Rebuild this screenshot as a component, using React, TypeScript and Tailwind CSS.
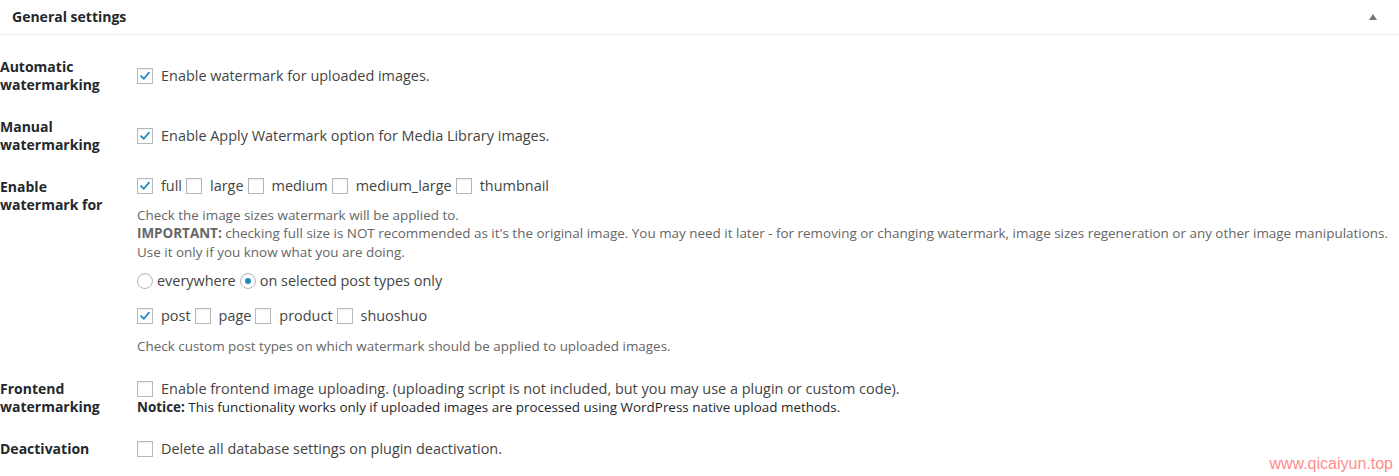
import React from "react";

const FONT = "font-['Open_Sans',sans-serif]";

function Check({ checked = false }: { checked?: boolean }) {
  return (
    <span className="relative inline-flex h-4 w-4 shrink-0 items-center justify-center border border-[#b4b9be] bg-white shadow-[inset_0_1px_2px_rgba(0,0,0,0.07)]">
      {checked && (
        <svg viewBox="0 0 16 16" className="h-4 w-4" aria-hidden>
          <path d="M3.6 8.2 L6.6 11.1 L12.4 4.3" fill="none" stroke="#1e8cbe" strokeWidth="2" strokeLinecap="square" />
        </svg>
      )}
    </span>
  );
}

function Radio({ checked = false }: { checked?: boolean }) {
  return (
    <span className="inline-flex h-4 w-4 shrink-0 items-center justify-center rounded-full border border-[#b4b9be] bg-white shadow-[inset_0_1px_2px_rgba(0,0,0,0.07)]">
      {checked && <span className="h-[6px] w-[6px] rounded-full bg-[#1e8cbe]" />}
    </span>
  );
}

function Opt({ checked, label }: { checked?: boolean; label: string }) {
  return (
    <span className="flex items-center">
      <Check checked={checked} />
      <span className="ml-[8px]">{label}</span>
    </span>
  );
}

export default function App() {
  return (
    <div className={`relative h-[476px] w-[1399px] overflow-hidden bg-white ${FONT} text-[14.45px] text-[#444]`}>
      <div className="flex h-[35px] items-center justify-between border-b border-[#eeeeee] pl-[12px] pr-[22px]">
        <span className="font-bold text-[#23282d] text-[14px] leading-[18px]">General settings</span>
        <svg viewBox="0 0 8 6" className="h-[6px] w-[8px]" aria-hidden>
          <path d="M4 0 L8 6 L0 6 Z" fill="#72777c" />
        </svg>
      </div>

      {/* Automatic */}
      <div className="mt-[23px] flex h-[36px] items-center">
        <div className="w-[137px] text-[14px] font-bold leading-[18px] text-[#23282d]">Automatic<br />watermarking</div>
        <div className="flex items-center leading-[18px]">
          <Opt checked label="Enable watermark for uploaded images." />
        </div>
      </div>

      {/* Manual */}
      <div className="mt-[24px] flex h-[36px] items-center">
        <div className="w-[137px] text-[14px] font-bold leading-[18px] text-[#23282d]">Manual<br />watermarking</div>
        <div className="flex items-center leading-[18px]">
          <Opt checked label="Enable Apply Watermark option for Media Library images." />
        </div>
      </div>

      {/* Enable watermark for */}
      <div className="mt-[23px] flex items-start">
        <div className="w-[137px] pt-[1px] text-[14px] font-bold leading-[18px] text-[#23282d]">Enable<br />watermark for</div>
        <div className="flex flex-col">
          <div className="flex h-[18px] items-center gap-[4px] leading-[18px]">
            <Opt checked label="full" />
            <Opt label="large" />
            <Opt label="medium" />
            <Opt label="medium_large" />
            <Opt label="thumbnail" />
          </div>
          <p className="mt-[10.5px] text-[13.45px] leading-[18.5px] text-[#666]">
            Check the image sizes watermark will be applied to.
            <br />
            <strong className="font-bold">IMPORTANT:</strong> checking full size is NOT recommended as it's the original image. You may need it later - for removing or changing watermark, image sizes regeneration or any other image manipulations.
            <br />
            Use it only if you know what you are doing.
          </p>
          <div className="mt-[11px] flex h-[18px] items-center gap-[4px] leading-[18px]">
            <span className="flex items-center">
              <Radio />
              <span className="ml-[4px]">everywhere</span>
            </span>
            <span className="flex items-center">
              <Radio checked />
              <span className="ml-[4px]">on selected post types only</span>
            </span>
          </div>
          <div className="mt-[17px] flex h-[18px] items-center gap-[4px] leading-[18px]">
            <Opt checked label="post" />
            <Opt label="page" />
            <Opt label="product" />
            <Opt label="shuoshuo" />
          </div>
          <p className="mt-[11.5px] text-[13.45px] leading-[18.5px] text-[#666]">
            Check custom post types on which watermark should be applied to uploaded images.
          </p>
        </div>
      </div>

      {/* Frontend */}
      <div className="mt-[25px] flex items-start">
        <div className="w-[137px] text-[14px] font-bold leading-[18px] text-[#23282d]">Frontend<br />watermarking</div>
        <div className="flex flex-col leading-[18px]">
          <div className="flex h-[18px] items-center">
            <Opt label="Enable frontend image uploading. (uploading script is not included, but you may use a plugin or custom code)." />
          </div>
          <div className="text-[13.45px] text-[#23282d]">
            <strong className="font-bold">Notice:</strong> This functionality works only if uploaded images are processed using WordPress native upload methods.
          </div>
        </div>
      </div>

      {/* Deactivation */}
      <div className="mt-[24px] flex h-[18px] items-center">
        <div className="w-[137px] text-[14px] font-bold leading-[18px] text-[#23282d]">Deactivation</div>
        <div className="flex items-center leading-[18px]">
          <Opt label="Delete all database settings on plugin deactivation." />
        </div>
      </div>

      <div className="absolute bottom-[2px] right-[6px] font-['Liberation_Sans',sans-serif] text-[16px] leading-[20px] text-[#ff7f7f] opacity-90">
        www.qicaiyun.top
      </div>
    </div>
  );
}
